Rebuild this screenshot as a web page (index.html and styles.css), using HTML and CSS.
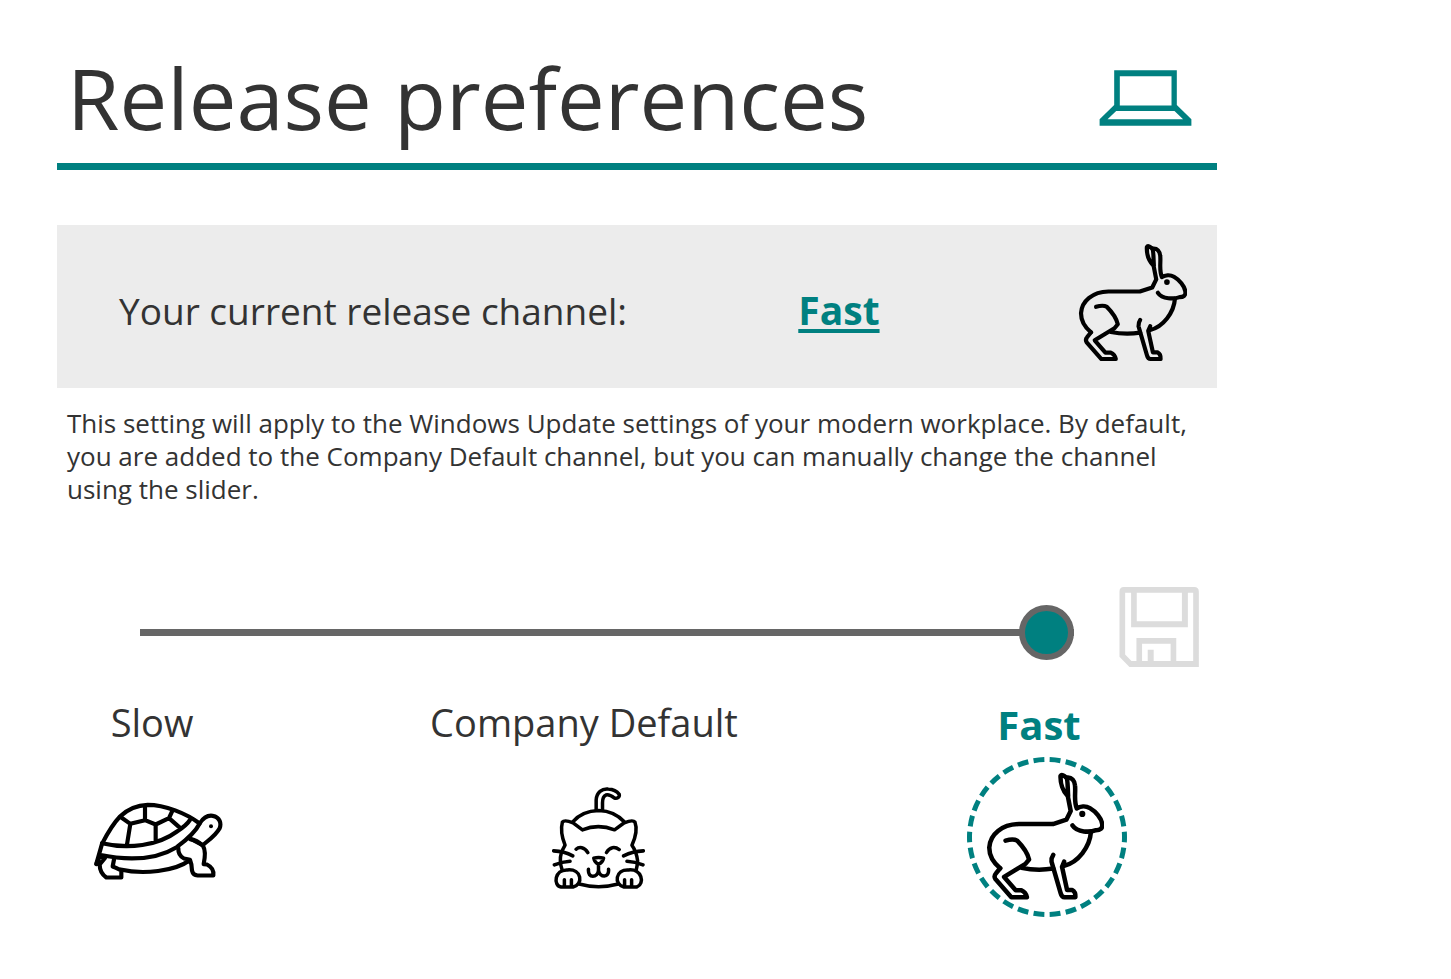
FILE: index.html
```html
<!DOCTYPE html>
<html lang="en">
<head>
<meta charset="utf-8">
<title>Release preferences</title>
<link rel="stylesheet" href="styles.css">
</head>
<body>
<svg class="sprite" aria-hidden="true">
  <symbol id="rabbit" viewBox="54 28 326 352">
    <g fill="none" stroke="#000" stroke-width="12.500" stroke-linecap="round" stroke-linejoin="round">
      <path d="M93 293C72 276 63 256 63 236C65 199 98 172 145 171H239L276 159L288 135L280 94C266 80 259 57 260 38C263 33 270 37 275 42C281 47 279 68 281 94"/>
      <path d="M277 43C291 41 299 51 300 65C302 86 296 107 305 128C314 122 329 120 341 127C357 136 373 155 375 171C377 183 369 188 358 188C342 194 306 195 293 175"/>
      <path d="M344 192C341 235 308 277 270 286M270 275L264 289L278 353H292Q302 358 301 373H271Q263 373 260 361L235 275Q234 265 240 256"/>
      <path d="M240 294Q195 301 152 292M108 217C121 213 132 212 140 217C155 232 169 253 173 269L163 281L104 317L136 354H152Q164 359 167 373H124L80 323Q75 315 81 308L93 293"/>
    </g>
    <circle cx="320" cy="143" r="8.500"/>
  </symbol>
</svg>
<main class="page">
  <header class="header">
    <h1 class="title">Release preferences</h1>
    <svg class="laptop" viewBox="27 29 279 169" role="img" aria-label="Laptop">
      <path fill="#008080" fill-rule="evenodd" d="M72 30H261V135L305 178V197H28V178L72 135ZM89 48V136H245V48ZM78 153L52 178H280L254 153Z"/>
    </svg>
  </header>
  <section class="current">
    <p class="current-label">Your current release channel:</p>
    <a class="current-value" href="#channels">Fast</a>
    <svg class="current-icon" aria-hidden="true"><use href="#rabbit"/></svg>
  </section>
  <p class="description">This setting will apply to the Windows Update settings of your modern workplace. By default, you are added to the Company Default channel, but you can manually change the channel using the slider.</p>
  <div class="control">
    <input class="slider" type="range" min="0" max="2" step="1" value="2" aria-label="Release channel">
    <button class="save" type="button" aria-label="Save" disabled>
      <svg class="save-icon" viewBox="327 20 240 241" aria-hidden="true">
        <path fill="#dcdcdc" fill-rule="evenodd" d="M341 20H553Q567 20 567 34V261H358L328 230V34Q328 20 341 20ZM345 37V223L364 243H379V174H499V243H550V37H534V141H363V37ZM380 37V123H516V37ZM396 191V243H413V209H431V243H482V191Z"/>
      </svg>
    </button>
  </div>
  <div class="channels" id="channels">
    <div class="channel">
      <span class="channel-name">Slow</span>
      <div class="badge">
        <svg class="turtle" viewBox="24 38 390 236" role="img" aria-label="Turtle">
          <g fill="none" stroke="#000" stroke-width="12.500" stroke-linecap="round" stroke-linejoin="round">
            <path d="M34 223L51 163C67 132 82 105 105 81C130 57 158 47 188 46C240 46 304 72 344 102C330 130 305 151 275 173C218 208 145 217 43 196"/>
            <path d="M51 161C130 180 220 168 276 126Q306 106 315 91M109 84L136 103L180 92L212 105L252 86L286 116M180 92V50M136 103L126 165M212 105V157M252 86L262 64"/>
            <path d="M344 102C356 83 370 77 383 79C406 83 409 103 404 116C392 138 373 150 353 167L315 147"/>
            <path d="M280 176Q279 198 297 207L315 211Q321 225 321 243Q324 257 338 258H385Q388 236 366 225L356 224Q364 185 354 169Q336 152 315 149M313 213C270 245 175 256 106 240"/>
            <path d="M34 224L44 201L60 205L44 225Q44 250 64 264H109V243L93 235L83 231L87 210"/>
          </g>
          <circle cx="378" cy="110" r="6"/>
        </svg>
      </div>
    </div>
    <div class="channel">
      <span class="channel-name channel-name-wide">Company Default</span>
      <div class="badge">
        <svg class="cat" viewBox="36 18 278 308" role="img" aria-label="Cat">
          <g fill="none" stroke="#000" stroke-width="10.500" stroke-linecap="round" stroke-linejoin="round">
            <path d="M168 89V60C169 37 186 25 204 27C219 28 231 35 237 43C239 51 230 57 223 54C211 45 204 43 197 45C188 49 187 57 187 68V88"/>
            <path d="M98 125C117 102 145 92 176 91C207 92 234 105 252 125M127 149L99 128Q73 118 67 126C62 145 65 170 75 195C65 212 60 225 61 240Q61 254 66 268M127 149Q174 130 223 149L252 128Q278 118 284 126C291 145 286 171 275 195C285 209 290 225 292 242Q291 257 288 268"/>
            <path d="M41 212Q72 213 98 227M43 254Q66 244 90 243M309 212Q278 213 250 227M308 254Q284 244 260 243M108 207C117 199 133 200 143 217M199 217C208 200 224 198 237 208"/>
            <path d="M161 234Q175 229 190 234Q187 247 175 252Q163 246 161 234ZM175 252V270C173 293 142 296 145 267M175 270C179 293 208 294 205 267M117 311Q175 327 234 311"/>
            <path d="M63 320C39 316 43 267 82 269C126 265 130 313 99 320ZM251 320C220 313 225 266 265 269C305 265 314 310 290 320ZM73 298V317M94 298V317M253 298V317M274 298V317"/>
          </g>
        </svg>
      </div>
    </div>
    <div class="channel">
      <strong class="channel-name channel-name-active">Fast</strong>
      <div class="badge">
        <svg class="ring" viewBox="0 0 160 160" aria-hidden="true">
          <circle cx="80" cy="80" r="77.500" fill="none" stroke="#008080" stroke-width="5" pathLength="360" stroke-dasharray="8 4" stroke-dashoffset="4"/>
        </svg>
        <svg class="rabbit" role="img" aria-label="Rabbit"><use href="#rabbit"/></svg>
      </div>
    </div>
  </div>
</main>
</body>
</html>
```
FILE: styles.css
```css
* { box-sizing: border-box; }

body {
  margin: 0;
  background: #fff;
  color: #333;
  font-family: "Segoe UI", "Open Sans", "Noto Sans", sans-serif;
}

.sprite { position: absolute; width: 0; height: 0; }

.page { width: 80%; max-width: 1160px; margin-left: 57px; padding-top: 32px; }

.header {
  display: flex;
  align-items: center;
  justify-content: space-between;
  padding: 0 25px 0 10px;
  border-bottom: 7px solid #008080;
}

.title { margin: 0; font-size: 85px; font-weight: 400; line-height: 131px; }

.laptop { width: 93px; height: 56px; }

.current {
  display: grid;
  grid-template-columns: 680fr 280fr 109px;
  align-items: center;
  margin-top: 55px;
  padding: 18px 30px 26px 62px;
  background: #ececec;
}

.current-label { margin: 0; padding-top: 17px; font-size: 37px; line-height: 50px; }

.current-value {
  justify-self: start;
  padding-top: 14px;
  color: #008080;
  font-size: 39px;
  font-weight: 700;
  line-height: 50px;
  text-decoration-thickness: 4px;
  text-underline-offset: 4px;
}

.current-icon { width: 109px; height: 119px; }

.description { margin: 19px 10px 0; font-size: 26px; line-height: 33px; }

.control {
  display: flex;
  align-items: center;
  gap: 45px;
  margin-top: 81px;
  padding: 0 18px 0 83px;
}

.slider {
  flex: 1;
  min-width: 0;
  height: 56px;
  margin: 10px 0 0;
  appearance: none;
  background: linear-gradient(#666, #666) center / 100% 7px no-repeat;
}

.slider::-webkit-slider-thumb {
  width: 55px;
  height: 55px;
  appearance: none;
  border: 6px solid #666;
  border-radius: 50%;
  background: #008080;
}

.save { width: 80px; height: 80px; padding: 0; border: 0; background: none; }

.save-icon { display: block; width: 80px; height: 80px; }

.channels {
  display: grid;
  grid-template-columns: 440fr 449fr 160px;
  margin-top: 30px;
  padding: 0 90px 0 21px;
}

.channel {
  display: flex;
  flex-direction: column;
  align-items: center;
  width: 160px;
}

.channel-name {
  height: 60px;
  padding-right: 12px;
  font-size: 38px;
  line-height: 50px;
  white-space: nowrap;
}

.channel-name-wide { padding-right: 28px; }

.channel-name-active {
  padding-right: 16px;
  color: #008080;
  font-size: 40px;
  font-weight: 700;
  line-height: 55px;
}

.badge {
  position: relative;
  display: grid;
  place-items: center;
  width: 160px;
  height: 160px;
}

.ring { position: absolute; inset: 0; }

.turtle { width: 130px; height: 79px; margin-top: 8px; }

.cat { width: 93px; height: 103px; }

.rabbit { width: 118px; height: 128px; margin: 0 4px 2px 0; }
```
